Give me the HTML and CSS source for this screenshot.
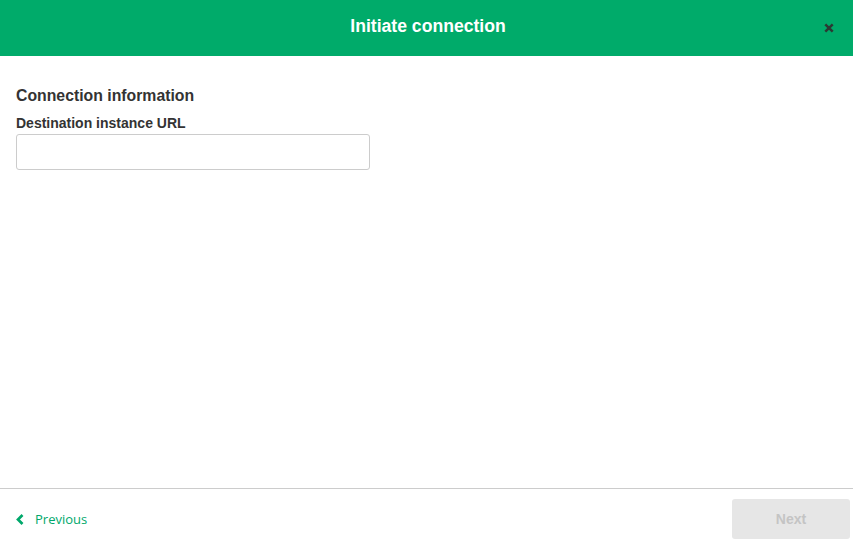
FILE: index.html
```html
<!DOCTYPE html>
<html lang="en">
<head>
<meta charset="utf-8">
<title>Initiate connection</title>
<link rel="stylesheet" href="styles.css">
</head>
<body>
<div class="modal">
  <header class="modal-header">
    <h1 class="modal-title">Initiate connection</h1>
    <button class="close-btn" aria-label="Close">
      <svg width="10" height="10" viewBox="0 0 10 10"><path d="M1.3 1.3 L8.7 8.7 M8.7 1.3 L1.3 8.7" stroke="#2b3a33" stroke-width="2.5" fill="none"/></svg>
    </button>
  </header>
  <main class="modal-body">
    <h2 class="section-title">Connection information</h2>
    <label class="field-label" for="url">Destination instance URL</label>
    <input class="text-input" id="url" type="text">
  </main>
  <footer class="modal-footer">
    <a class="prev-link" href="#">
      <svg class="chev" width="8" height="11" viewBox="0 0 8 11"><path d="M6.5 1 L2 5.5 L6.5 10" stroke="#00a86b" stroke-width="2.7" fill="none"/></svg>
      <span>Previous</span>
    </a>
    <button class="next-btn" disabled>Next</button>
  </footer>
</div>
</body>
</html>
```
FILE: styles.css
```css
html, body {
  margin: 0;
  padding: 0;
  background: #ffffff;
}
body {
  font-family: "Liberation Sans", Arial, sans-serif;
  color: #333333;
}
.modal {
  width: 853px;
  height: 545px;
  display: flex;
  flex-direction: column;
  overflow: hidden;
}
.modal-header {
  position: relative;
  height: 56px;
  flex: 0 0 56px;
  background: #00ab6a;
  display: flex;
  align-items: center;
  justify-content: center;
}
.modal-title {
  margin: 0 0 4px;
  font-size: 17.6px;
  font-weight: bold;
  color: #ffffff;
  line-height: 22px;
  transform: translateX(1.5px);
}
.close-btn {
  position: absolute;
  right: 19px;
  top: 23px;
  width: 10px;
  height: 10px;
  padding: 0;
  border: 0;
  background: transparent;
  display: flex;
}
.modal-body {
  flex: 1;
  padding: 30px 16px 0;
  display: flex;
  flex-direction: column;
  align-items: flex-start;
}
.section-title {
  margin: 0 0 8px;
  font-size: 15.8px;
  line-height: 20px;
  font-weight: bold;
  color: #333333;
}
.field-label {
  font-size: 14px;
  line-height: 18px;
  font-weight: bold;
  color: #333333;
}
.text-input {
  margin-top: 2px;
  box-sizing: border-box;
  width: 354px;
  height: 36px;
  border: 1px solid #cccccc;
  border-radius: 3px;
  background: #ffffff;
  padding: 0 8px;
}
.modal-footer {
  flex: 0 0 auto;
  border-top: 1px solid #cccccc;
  padding: 10px 3px 6px 16px;
  display: flex;
  align-items: center;
  justify-content: space-between;
}
.prev-link {
  display: flex;
  align-items: center;
  gap: 11px;
  color: #00a86b;
  text-decoration: none;
  font-family: "Open Sans", sans-serif;
  font-size: 13px;
}
.chev {
  display: block;
}
.next-btn {
  width: 118px;
  height: 40px;
  border: 0;
  border-radius: 3px;
  background: #e6e6e6;
  color: #c4c4c4;
  font-family: "Liberation Sans", Arial, sans-serif;
  font-size: 14px;
  font-weight: bold;
}
```
